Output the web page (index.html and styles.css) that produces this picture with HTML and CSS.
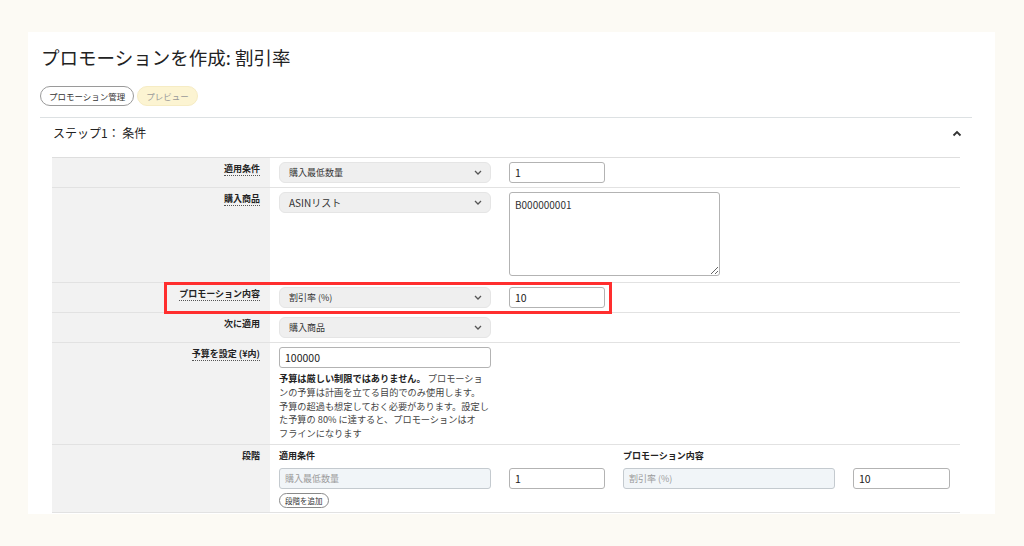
FILE: index.html
```html
<!DOCTYPE html>
<html lang="ja">
<head>
<meta charset="utf-8">
<title>プロモーションを作成: 割引率</title>
<link rel="stylesheet" href="styles.css">
</head>
<body>
<div class="card">
  <h1 class="title">プロモーションを作成: 割引率</h1>
  <div class="actions">
    <span class="pill">プロモーション管理</span>
    <span class="pill pill-preview">プレビュー</span>
  </div>
  <div class="step">
    <span class="step-title">ステップ1： 条件</span>
    <svg class="step-chevron" width="10" height="7" viewBox="0 0 10 7"><path d="M1.5 5.5 L5 2 L8.5 5.5" fill="none" stroke="#333" stroke-width="1.8"/></svg>
  </div>
  <div class="table">
    <div class="row">
      <div class="label"><span class="u">適用条件</span></div>
      <div class="content">
        <div class="select"><span>購入最低数量</span><svg class="chev" width="8" height="5" viewBox="0 0 8 5"><path d="M1 1 L4 4 L7 1" fill="none" stroke="#555" stroke-width="1.3"/></svg></div>
        <div class="input small">1</div>
      </div>
    </div>
    <div class="row">
      <div class="label"><span class="u">購入商品</span></div>
      <div class="content top">
        <div class="select"><span class="latin">ASINリスト</span><svg class="chev" width="8" height="5" viewBox="0 0 8 5"><path d="M1 1 L4 4 L7 1" fill="none" stroke="#555" stroke-width="1.3"/></svg></div>
        <textarea class="textarea">B000000001</textarea>
      </div>
    </div>
    <div class="row">
      <div class="label"><span class="u">プロモーション内容</span></div>
      <div class="content">
        <div class="select"><span>割引率 (%)</span><svg class="chev" width="8" height="5" viewBox="0 0 8 5"><path d="M1 1 L4 4 L7 1" fill="none" stroke="#555" stroke-width="1.3"/></svg></div>
        <div class="input small">10</div>
      </div>
    </div>
    <div class="row">
      <div class="label">次に適用</div>
      <div class="content">
        <div class="select"><span>購入商品</span><svg class="chev" width="8" height="5" viewBox="0 0 8 5"><path d="M1 1 L4 4 L7 1" fill="none" stroke="#555" stroke-width="1.3"/></svg></div>
      </div>
    </div>
    <div class="row">
      <div class="label"><span class="u">予算を設定 (¥内)</span></div>
      <div class="content col">
        <div class="input wide">100000</div>
        <p class="help"><b>予算は厳しい制限ではありません。</b> プロモーショ<br>ンの予算は計画を立てる目的でのみ使用します。<br>予算の超過も想定しておく必要があります。設定し<br>た予算の 80% に達すると、プロモーションはオ<br>フラインになります</p>
      </div>
    </div>
    <div class="row last">
      <div class="label">段階</div>
      <div class="content tiers">
        <div class="th c1">適用条件</div>
        <div class="th c3">プロモーション内容</div>
        <div class="input disabled c1">購入最低数量</div>
        <div class="input">1</div>
        <div class="input disabled">割引率 (%)</div>
        <div class="input">10</div>
        <div class="c1 add"><span class="pill pill-small">段階を追加</span></div>
      </div>
    </div>
    <div class="highlight"></div>
  </div>
</div>
</body>
</html>
```

FILE: styles.css
```css
* { box-sizing: border-box; }

html, body {
  margin: 0;
  padding: 0;
}

body {
  background: #fcfaf4;
  font-family: "Noto Sans CJK JP", "Noto Sans", sans-serif;
  color: #222;
  height: 546px;
  overflow: hidden;
}

.card {
  background: #fff;
  margin: 32px 29px 0 28px;
  padding: 12px 23px 1px 12px;
}

.title {
  margin: 0 0 0 1px;
  font-size: 18.5px;
  line-height: 26px;
  font-weight: 400;
  color: #222;
}

.actions {
  display: flex;
  gap: 3px;
  margin-top: 16px;
}

.pill {
  display: inline-flex;
  align-items: center;
  height: 20px;
  padding: 0 8px;
  border: 1px solid #9a9a9a;
  border-radius: 10px;
  font-size: 8.5px;
  color: #333;
  background: #fff;
}

.pill-preview {
  background: #fcf4d2;
  border-color: #f6ecc4;
  color: #999;
}

.pill-small {
  height: 15px;
  padding: 0 5px;
  font-size: 7.5px;
  border-color: #8a8a8a;
}

.step {
  margin-top: 11px;
  border-top: 1px solid #dde1e3;
  height: 40px;
  display: flex;
  align-items: flex-start;
  justify-content: space-between;
  padding: 6px 10px 0 13px;
}

.step-title {
  font-size: 12px;
  line-height: 18px;
  color: #222;
}

.step-chevron {
  margin-top: 6px;
}

.table {
  position: relative;
  margin: 0 12px;
  border-top: 1px solid #dedede;
}

.row {
  display: grid;
  grid-template-columns: 218px 1fr;
  border-bottom: 1px solid #e2e2e2;
}

.label {
  background: #f2f2f2;
  text-align: right;
  padding: 5px 10px 0 0;
  font-size: 9px;
  line-height: 12px;
  font-weight: 700;
  color: #222;
}

.u {
  border-bottom: 1px dotted #555;
}

.content {
  display: flex;
  align-items: flex-start;
  gap: 18px;
  padding: 4px 9px 4px 9px;
}

.content.top {
  padding-bottom: 6px;
}

.content.col {
  flex-direction: column;
  gap: 4px;
  padding-bottom: 3px;
}

.select {
  width: 212px;
  height: 21px;
  background: #efefef;
  border: 1px solid #e5e5e5;
  border-radius: 6px;
  display: flex;
  align-items: center;
  justify-content: space-between;
  padding: 0 8px 0 9px;
  font-size: 9px;
  color: #333;
}

.latin {
  font-size: 10px;
}

.input {
  height: 21px;
  border: 1px solid #b3b3b3;
  border-radius: 3px;
  display: flex;
  align-items: center;
  padding: 0 5px;
  font-size: 10.5px;
  color: #222;
  background: #fff;
}

.input.small {
  width: 96px;
}

.input.wide {
  width: 212px;
}

.input.disabled {
  background: #f1f5f8;
  border-color: #c4cacf;
  color: #9a9a9a;
  font-size: 9px;
}

.textarea {
  display: block;
  width: 211px;
  height: 84px;
  border: 1px solid #b3b3b3;
  border-radius: 3px;
  padding: 4px 5px;
  font-family: "Noto Sans CJK JP", "Noto Sans", sans-serif;
  font-size: 10px;
  color: #333;
  resize: both;
  margin: 0;
}

.help {
  margin: 0;
  width: 215px;
  font-size: 9.2px;
  line-height: 13.8px;
  color: #444;
  white-space: nowrap;
}

.help b {
  color: #222;
}

.tiers {
  display: grid;
  grid-template-columns: 212px 96px 212px 97px;
  column-gap: 18px;
  row-gap: 0;
  padding: 5px 9px 4px 9px;
}

.tiers .th {
  font-size: 9px;
  line-height: 12px;
  font-weight: 700;
  margin-bottom: 6px;
}

.tiers .c1 { grid-column: 1; }
.tiers .c3 { grid-column: 3; }

.tiers .add {
  display: flex;
  margin-top: 4px;
}

.highlight {
  position: absolute;
  left: 112px;
  top: 124px;
  width: 448px;
  height: 32px;
  border: 3px solid #ff2e2e;
}
```
